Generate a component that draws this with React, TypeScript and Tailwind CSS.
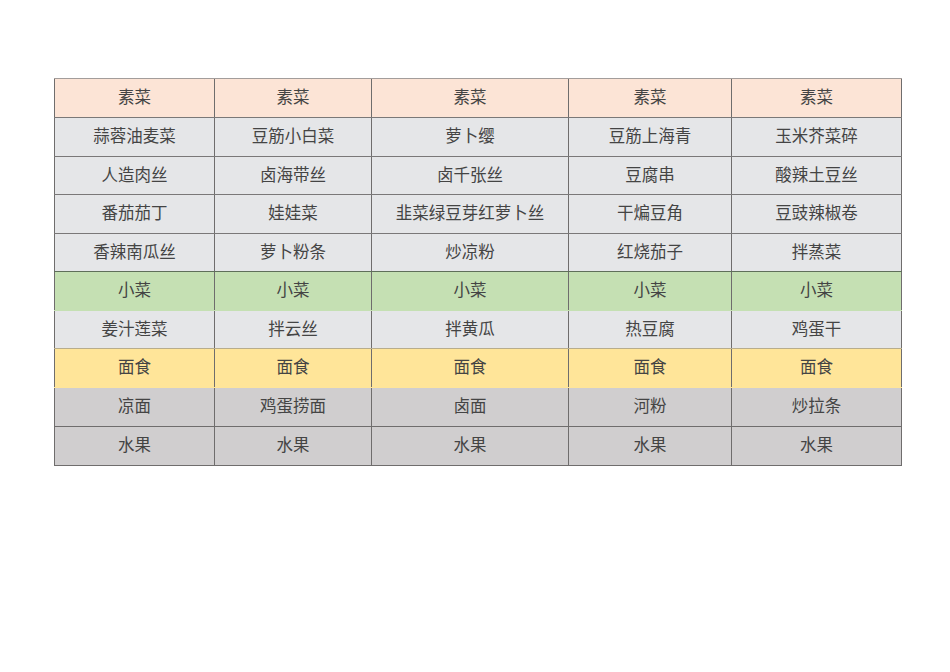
const cols = ['w-[160px]', 'w-[157px]', 'w-[197px]', 'w-[163px]', 'w-[171px]'];

type Row = { cells: string[]; bg: string; line: string; h: string };

const rows: Row[] = [
  { cells: ['素菜', '素菜', '素菜', '素菜', '素菜'], bg: 'bg-[#fce4d6]', line: 'border-t border-t-[#a39d9b]', h: 'h-[39px]' },
  { cells: ['蒜蓉油麦菜', '豆筋小白菜', '萝卜缨', '豆筋上海青', '玉米芥菜碎'], bg: 'bg-[#e5e6e8]', line: 'border-t border-t-[#7a7878]', h: 'h-[39px]' },
  { cells: ['人造肉丝', '卤海带丝', '卤千张丝', '豆腐串', '酸辣土豆丝'], bg: 'bg-[#e5e6e8]', line: 'border-t border-t-[#7a7878]', h: 'h-[38px]' },
  { cells: ['番茄茄丁', '娃娃菜', '韭菜绿豆芽红萝卜丝', '干煸豆角', '豆豉辣椒卷'], bg: 'bg-[#e5e6e8]', line: 'border-t border-t-[#7a7878]', h: 'h-[39px]' },
  { cells: ['香辣南瓜丝', '萝卜粉条', '炒凉粉', '红烧茄子', '拌蒸菜'], bg: 'bg-[#e5e6e8]', line: 'border-t border-t-[#7a7878]', h: 'h-[38px]' },
  { cells: ['小菜', '小菜', '小菜', '小菜', '小菜'], bg: 'bg-[#c5e0b3]', line: 'border-t border-t-[#5f6f5a]', h: 'h-[39px]' },
  { cells: ['姜汁莲菜', '拌云丝', '拌黄瓜', '热豆腐', '鸡蛋干'], bg: 'bg-[#e5e6e8]', line: 'border-t border-t-[#c5e0b3]', h: 'h-[38px]' },
  { cells: ['面食', '面食', '面食', '面食', '面食'], bg: 'bg-[#ffe599]', line: 'border-t border-t-[#b8ad8c]', h: 'h-[39px]' },
  { cells: ['凉面', '鸡蛋捞面', '卤面', '河粉', '炒拉条'], bg: 'bg-[#d0cecf]', line: 'border-t border-t-[#ffe599]', h: 'h-[39px]' },
  { cells: ['水果', '水果', '水果', '水果', '水果'], bg: 'bg-[#d0cecf]', line: 'border-t border-t-[#6f6d6d]', h: 'h-[39px]' },
];

export default function App() {
  return (
    <div className="w-[950px] h-[672px] bg-white pt-[78px] pl-[54px] font-['Noto_Sans_CJK_SC',sans-serif] text-[16.5px] text-[#444444]">
      <div className="w-[848px] border-b border-b-[#6f6d6d]">
        {rows.map((row, i) => (
          <div key={i} className={`flex ${row.h} ${row.bg} ${row.line}`}>
            {row.cells.map((c, j) => (
              <div
                key={j}
                className={`${cols[j]} flex items-center justify-center pb-[3px] border-l border-l-[#6f6d6d] ${j === 4 ? 'border-r border-r-[#6f6d6d]' : ''}`}
              >
                {c}
              </div>
            ))}
          </div>
        ))}
      </div>
    </div>
  );
}
